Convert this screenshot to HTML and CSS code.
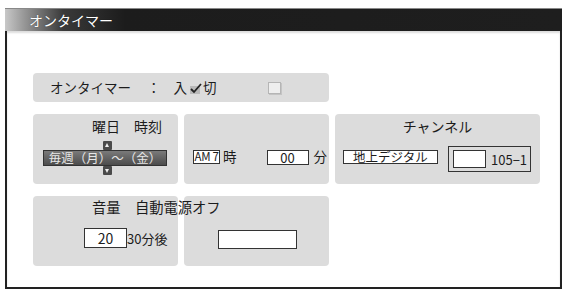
FILE: index.html
```html
<!DOCTYPE html>
<html lang="ja">
<head>
    <meta charset="UTF-8">
    <title>オンタイマー</title>
    <link rel="stylesheet" href="styles.css">
</head>
<body>
    <div class="window">
        <div class="titlebar"><span>オンタイマー</span></div>
        <div class="frame">
            <div class="grid">
                <!-- on / off -->
                <div class="panel switch">
                    <span class="label">オンタイマー</span>
                    <span class="colon">：</span>
                    <span class="on">入</span>
                    <svg class="check" width="14" height="14" viewBox="0 0 14 14">
                        <rect x="1" y="5" width="10" height="8" fill="#b9b9b9"/>
                        <path d="M2 8 L5 11 L12 3" fill="none" stroke="#222" stroke-width="1.8"/>
                    </svg>
                    <span class="off">切</span>
                    <span class="box"></span>
                </div>

                <!-- day -->
                <div class="panel days">
                    <div class="head">曜日　時刻</div>
                    <div class="spinner">
                        <span class="arrow up"></span>
                        毎週（月）～（金）
                        <span class="arrow down"></span>
                    </div>
                </div>

                <!-- time -->
                <div class="panel time">
                    <span class="field ampm">AM 7</span>
                    <span class="unit hour">時</span>
                    <span class="field minute">00</span>
                    <span class="unit">分</span>
                </div>

                <!-- channel -->
                <div class="panel channel">
                    <div class="head center">チャンネル</div>
                    <div class="channel-row">
                        <span class="field band">地上デジタル</span>
                        <span class="number">
                            <span class="field inner"></span>
                            <span class="ch">105−1</span>
                        </span>
                    </div>
                </div>

                <!-- volume / auto off -->
                <div class="panel volume">
                    <div class="head">音量　自動電源オフ</div>
                    <div class="volume-row">
                        <span class="field vol">20</span>
                        <span class="after">30分後</span>
                    </div>
                </div>

                <div class="panel autooff">
                    <span class="field empty"></span>
                </div>
            </div>
        </div>
    </div>
</body>
</html>
```

FILE: styles.css
```css
* {
    margin: 0;
    padding: 0;
    box-sizing: border-box;
}

body {
    font-family: "Noto Sans CJK JP", "Noto Sans", sans-serif;
    font-size: 13.5px;
    color: #1c1c1c;
    background: #fff;
    line-height: 1;
}

.window {
    margin: 8px 0 0 5px;
    width: 557px;
}

.titlebar {
    height: 23px;
    display: flex;
    align-items: center;
    padding-left: 24px;
    font-size: 14px;
    color: #fff;
    background: linear-gradient(90deg, #c8c8c8 0px, #9a9a9a 18px, #3a3a3a 58px, #1c1c1c 120px, #1e1e1e 100%);
    border-top: 1px solid #888;
    text-shadow: 0 0 1px rgba(0, 0, 0, 0.6);
}

.frame {
    height: 258px;
    border: 2px solid #222;
    border-top: none;
    box-shadow: inset 0 2px 2px #ddd;
}

.grid {
    display: grid;
    grid-template-columns: 145px 145px 205px;
    grid-template-rows: 29px 70px 70px;
    column-gap: 6px;
    row-gap: 12px;
    padding: 42px 0 0 26px;
}

.panel {
    background: #dcdcdc;
    border-radius: 4px;
}

.head {
    font-size: 14px;
    line-height: 14px;
    padding: 5px 0 0 59px;
    white-space: nowrap;
}

.head.center {
    padding-left: 0;
    text-align: center;
}

.field {
    display: inline-flex;
    align-items: center;
    justify-content: center;
    background: #fff;
    border: 1px solid #333;
    white-space: nowrap;
}

/* row 1 */
.switch {
    grid-column: 1 / 3;
    grid-row: 1;
    display: flex;
    align-items: center;
    padding-left: 17px;
}

.colon {
    margin-left: 16px;
}

.on {
    margin-left: 13px;
}

.check {
    margin-left: 2px;
}

.box {
    width: 13px;
    height: 12px;
    margin-left: 51px;
    background: #eee;
    border: 1px solid #b5b5b5;
    box-shadow: 1px 1px 0 #c4c4c4;
}

/* days */
.days {
    grid-column: 1;
    grid-row: 2;
}

.spinner {
    position: relative;
    margin: 17px 0 0 10px;
    width: 124px;
    height: 16px;
    display: flex;
    align-items: center;
    justify-content: center;
    font-size: 12.5px;
    color: #e6e6e6;
    background: linear-gradient(#7a7a7a, #4c4c4c);
    border: 1px solid #333;
    white-space: nowrap;
}

.arrow {
    position: absolute;
    left: 59px;
    width: 9px;
    height: 9px;
    background: #4a4a4a;
    border-radius: 1px;
}

.arrow::after {
    content: "";
    position: absolute;
    left: 2px;
    border-left: 2.5px solid transparent;
    border-right: 2.5px solid transparent;
}

.arrow.up {
    top: -10px;
}

.arrow.up::after {
    top: 2px;
    border-bottom: 4px solid #eee;
}

.arrow.down {
    bottom: -10px;
}

.arrow.down::after {
    top: 3px;
    border-top: 4px solid #eee;
}

/* time */
.time {
    grid-column: 2;
    grid-row: 2;
    display: flex;
    align-items: center;
    padding: 16px 0 0 9px;
}

.ampm {
    width: 27px;
    height: 14px;
    font-size: 11.5px;
    letter-spacing: -0.3px;
}

.hour {
    margin-left: 3px;
}

.minute {
    width: 42px;
    height: 15px;
    margin-left: 30px;
    margin-right: 5px;
    font-size: 13px;
}

/* channel */
.channel {
    grid-column: 3;
    grid-row: 2;
}

.channel-row {
    display: flex;
    align-items: flex-start;
    margin-top: 13px;
    padding-left: 8px;
}

.band {
    width: 95px;
    height: 14px;
    margin-top: 4px;
    font-size: 12.5px;
}

.number {
    display: flex;
    align-items: center;
    width: 83px;
    height: 26px;
    margin-left: 10px;
    padding-left: 4px;
    border: 1px solid #333;
}

.inner {
    width: 33px;
    height: 18px;
}

.ch {
    margin-left: 5px;
    font-size: 13px;
}

/* volume */
.volume {
    grid-column: 1;
    grid-row: 3;
    position: relative;
    z-index: 1;
}

.volume .head {
    padding-top: 4px;
    font-size: 14.3px;
}

.volume-row {
    display: flex;
    align-items: center;
    margin: 14px 0 0 51px;
}

.vol {
    width: 43px;
    height: 20px;
    font-size: 14px;
}

.after {
    font-size: 13px;
}

.autooff {
    grid-column: 2;
    grid-row: 3;
    padding: 34px 0 0 34px;
}

.empty {
    width: 79px;
    height: 19px;
}
```
